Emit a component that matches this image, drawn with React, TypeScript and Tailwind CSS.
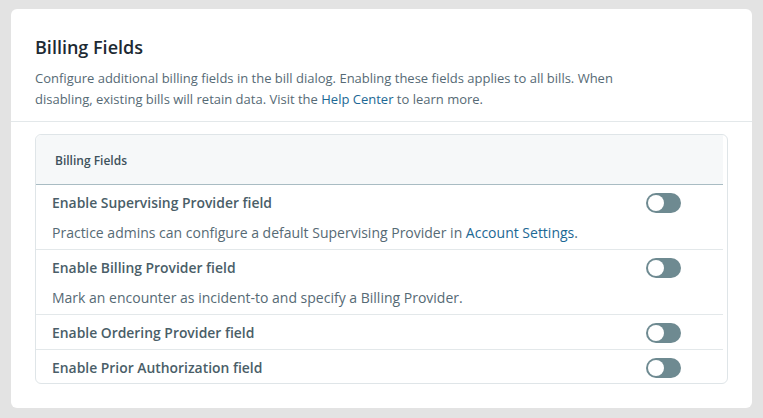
import React from "react"

const FIELDS = [
  {
    title: "Enable Supervising Provider field",
    description: (
      <>
        Practice admins can configure a default Supervising Provider in{" "}
        <a className="text-[#1c6894]">Account Settings</a>.
      </>
    ),
  },
  {
    title: "Enable Billing Provider field",
    description: <>Mark an encounter as incident-to and specify a Billing Provider.</>,
  },
  { title: "Enable Ordering Provider field" },
  { title: "Enable Prior Authorization field" },
]

function Toggle() {
  return (
    <div className="w-[35px] h-[20px] rounded-full bg-[#6e8a91] flex items-center px-[2px] shrink-0">
      <div className="w-[16px] h-[16px] rounded-full bg-white" />
    </div>
  )
}

export default function App() {
  return (
    <div
      className="min-h-[418px] bg-[#e3e3e3] pt-[9px] pb-[10px] px-[11px]"
      style={{ fontFamily: '"Open Sans", sans-serif' }}
    >
      <div className="bg-white rounded-[6px] pb-[24px]">
        <div className="px-[24px] pt-[26px] pb-[11px] border-b border-[#e3e8ea]">
          <h2 className="text-[18px] leading-[24px] font-semibold text-[#1d2a33]">Billing Fields</h2>
          <p className="mt-[9px] text-[13px] leading-[21px] text-[#566a75] pr-[40px]">
            Configure additional billing fields in the bill dialog. Enabling these fields applies to all bills. When
            <br />
            disabling, existing bills will retain data. Visit the <a className="text-[#1c6894]">Help Center</a> to
            learn more.
          </p>
        </div>
        <div className="mx-[24px] mt-[12px] border border-[#dfe5e8] rounded-[6px] overflow-hidden">
          <div className="mr-[4px]">
            <div className="bg-[#f6f8f9] h-[50px] border-b border-[#a9bcc3] flex items-end pb-[14px] pl-[19px] rounded-tl-[6px]">
              <span className="text-[12px] font-semibold text-[#3e525c]">Billing Fields</span>
            </div>
            {FIELDS.map((f, i) => {
              const last = i === FIELDS.length - 1
              return (
                <div
                  key={f.title}
                  className={`pl-[16px] pr-[42px] pt-[8px] ${last ? "pb-[5px]" : "pb-[6px] border-b border-[#e3e8ea]"}`}
                >
                  <div className="flex items-center justify-between h-[20px]">
                    <span className="text-[13.9px] font-semibold text-[#4a5e68]">{f.title}</span>
                    <Toggle />
                  </div>
                  {f.description && (
                    <p className="mt-[10px] text-[14px] leading-[20px] text-[#566a75]">{f.description}</p>
                  )}
                </div>
              )
            })}
          </div>
        </div>
      </div>
    </div>
  )
}
